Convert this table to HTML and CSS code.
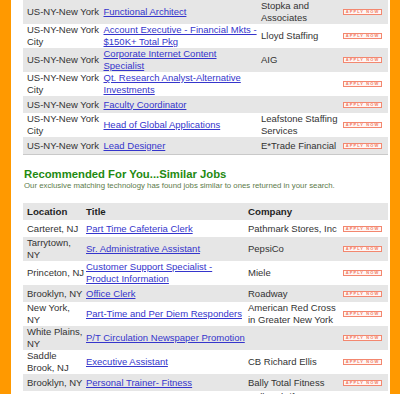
FILE: index.html
```html
<!DOCTYPE html>
<html>
<head>
<meta charset="utf-8">
<link rel="stylesheet" href="styles.css">
</head>
<body>
<div class="frame">
  <div class="bar"></div>
  <main class="content">
    <table class="jobs top">
      <colgroup><col class="c1"><col class="c2"><col class="c3"><col class="c4"></colgroup>
      <tr class="alt"><td class="loc">US-NY-New York</td><td class="title"><a href="#">Functional Architect</a></td><td class="co">Stopka and Associates</td><td class="act"><span class="apply">APPLY NOW</span></td></tr>
      <tr><td class="loc">US-NY-New York City</td><td class="title"><a href="#">Account Executive - Financial Mkts - $150K+ Total Pkg</a></td><td class="co">Lloyd Staffing</td><td class="act"><span class="apply">APPLY NOW</span></td></tr>
      <tr class="alt"><td class="loc">US-NY-New York</td><td class="title"><a href="#">Corporate Internet Content Specialist</a></td><td class="co">AIG</td><td class="act"><span class="apply">APPLY NOW</span></td></tr>
      <tr><td class="loc">US-NY-New York City</td><td class="title"><a href="#">Qt. Research Analyst-Alternative Investments</a></td><td class="co"></td><td class="act"><span class="apply">APPLY NOW</span></td></tr>
      <tr class="alt"><td class="loc">US-NY-New York</td><td class="title"><a href="#">Faculty Coordinator</a></td><td class="co"></td><td class="act"><span class="apply">APPLY NOW</span></td></tr>
      <tr><td class="loc">US-NY-New York City</td><td class="title"><a href="#">Head of Global Applications</a></td><td class="co">Leafstone Staffing Services</td><td class="act"><span class="apply">APPLY NOW</span></td></tr>
      <tr class="alt last"><td class="loc">US-NY-New York</td><td class="title"><a href="#">Lead Designer</a></td><td class="co">E*Trade Financial</td><td class="act"><span class="apply">APPLY NOW</span></td></tr>
    </table>

    <h2 class="rec-title">Recommended For You...Similar Jobs</h2>
    <p class="rec-sub">Our exclusive matching technology has found jobs similar to ones returned in your search.</p>

    <table class="jobs similar">
      <colgroup><col class="s1"><col class="s2"><col class="s3"><col class="s4"></colgroup>
      <tr class="alt head"><th class="loc">Location</th><th class="title">Title</th><th class="co">Company</th><th class="act"></th></tr>
      <tr><td class="loc">Carteret, NJ</td><td class="title"><a href="#">Part Time Cafeteria Clerk</a></td><td class="co">Pathmark Stores, Inc</td><td class="act"><span class="apply">APPLY NOW</span></td></tr>
      <tr class="alt"><td class="loc">Tarrytown, NY</td><td class="title"><a href="#">Sr. Administrative Assistant</a></td><td class="co">PepsiCo</td><td class="act"><span class="apply">APPLY NOW</span></td></tr>
      <tr><td class="loc">Princeton, NJ</td><td class="title"><a href="#">Customer Support Specialist - Product Information</a></td><td class="co">Miele</td><td class="act"><span class="apply">APPLY NOW</span></td></tr>
      <tr class="alt"><td class="loc">Brooklyn, NY</td><td class="title"><a href="#">Office Clerk</a></td><td class="co">Roadway</td><td class="act"><span class="apply">APPLY NOW</span></td></tr>
      <tr><td class="loc">New York, NY</td><td class="title"><a href="#">Part-Time and Per Diem Responders</a></td><td class="co">American Red Cross in Greater New York</td><td class="act"><span class="apply">APPLY NOW</span></td></tr>
      <tr class="alt"><td class="loc">White Plains, NY</td><td class="title"><a href="#">P/T Circulation Newspaper Promotion</a></td><td class="co"></td><td class="act"><span class="apply">APPLY NOW</span></td></tr>
      <tr><td class="loc">Saddle Brook, NJ</td><td class="title"><a href="#">Executive Assistant</a></td><td class="co">CB Richard Ellis</td><td class="act"><span class="apply">APPLY NOW</span></td></tr>
      <tr class="alt"><td class="loc">Brooklyn, NY</td><td class="title"><a href="#">Personal Trainer- Fitness</a></td><td class="co">Bally Total Fitness</td><td class="act"><span class="apply">APPLY NOW</span></td></tr>
      <tr class="tail"><td class="loc"></td><td class="title"></td><td class="co">Dollar Thrifty Automotive Group</td><td class="act"></td></tr>
    </table>
  </main>
  <div class="bar"></div>
</div>
</body>
</html>
```

FILE: styles.css
```css
html, body {
  margin: 0;
  padding: 0;
  background: #ffffff;
}

.frame {
  display: flex;
  width: 400px;
  height: 394px;
  overflow: hidden;
  font-family: "Liberation Sans", Arial, sans-serif;
}

.bar {
  flex: 0 0 11px;
  background: #ff9900;
}

.bar:last-child {
  flex-basis: 10px;
}

.content {
  flex: 1 1 auto;
  padding: 0 1px 0 12px;
  min-width: 0;
}

.jobs {
  width: 365px;
  table-layout: fixed;
  border-collapse: collapse;
  font-size: 9.5px;
  line-height: 12px;
  color: #333333;
}

.jobs td,
.jobs th {
  height: 17px;
  padding: 0;
  vertical-align: middle;
  text-align: left;
}

.jobs tr.tail td {
  vertical-align: top;
}

.jobs tr.alt td,
.jobs tr.alt th {
  background: #e6e6e6;
}

.jobs a {
  color: #3535cc;
  text-decoration: underline;
}

.top .c1 { width: 80px; }
.top .c2 { width: 158px; }
.top .c3 { width: 82px; }
.top .c4 { width: 45px; }

.top td.loc { padding-left: 4px; }
.top td.title { padding-left: 0.5px; padding-right: 2px; }
.top td.co { padding-right: 2px; }

.top tr.last td {
  border-bottom: 1px solid #c9c9c9;
}

.similar .s1 { width: 62px; }
.similar .s2 { width: 162px; }
.similar .s3 { width: 94px; }
.similar .s4 { width: 47px; }

.similar .loc { padding-left: 4px; }
.similar .title { padding-left: 1px; padding-right: 1px; }
.similar .co { padding-left: 1px; padding-right: 1px; }
.similar .act { padding-left: 2px; }

.similar th {
  font-weight: bold;
  font-size: 9.7px;
  color: #1f1f1f;
}

.apply {
  display: block;
  width: 37px;
  height: 4px;
  border: 1px solid #f3876f;
  background: #fff6f4;
  color: #f07a64;
  font-size: 4px;
  line-height: 4px;
  letter-spacing: 1.1px;
  text-align: center;
  font-weight: bold;
  overflow: hidden;
  white-space: nowrap;
}

.rec-title {
  margin: 12.5px 0 0 1px;
  font-size: 11.3px;
  line-height: 13px;
  font-weight: bold;
  color: #1f8a12;
}

.rec-sub {
  margin: 0.5px 0 12px 1px;
  font-size: 7.8px;
  line-height: 10px;
  color: #5c7b4a;
}
```
